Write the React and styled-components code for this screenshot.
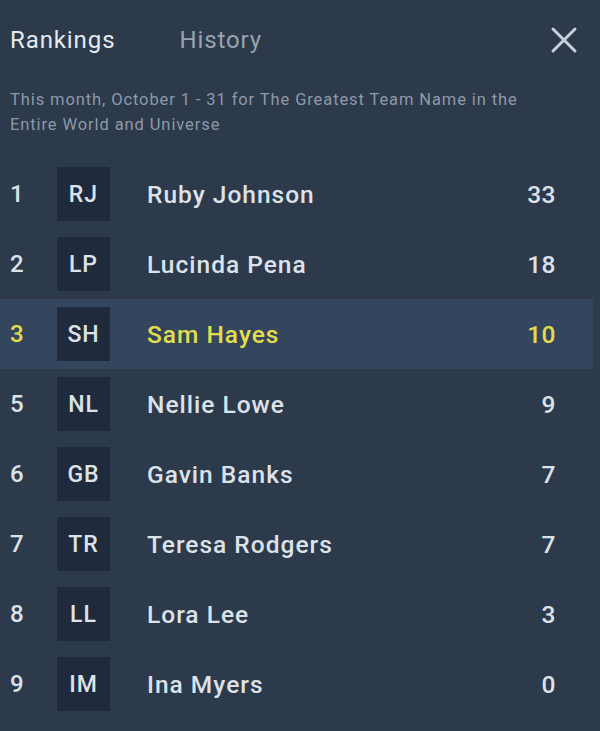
import React from 'react'
import styled, { createGlobalStyle } from 'styled-components'

const players = [
  { rank: 1, initials: 'RJ', name: 'Ruby Johnson', score: 33 },
  { rank: 2, initials: 'LP', name: 'Lucinda Pena', score: 18 },
  { rank: 3, initials: 'SH', name: 'Sam Hayes', score: 10, me: true },
  { rank: 5, initials: 'NL', name: 'Nellie Lowe', score: 9 },
  { rank: 6, initials: 'GB', name: 'Gavin Banks', score: 7 },
  { rank: 7, initials: 'TR', name: 'Teresa Rodgers', score: 7 },
  { rank: 8, initials: 'LL', name: 'Lora Lee', score: 3 },
  { rank: 9, initials: 'IM', name: 'Ina Myers', score: 0 },
]

function App() {
  return (
    <>
      <GlobalStyle />
      <Panel>
        <Header>
          <Tab active>Rankings</Tab>
          <Tab>History</Tab>
          <Close aria-label="close">
            <svg width="28" height="28" viewBox="0 0 28 28">
              <path d="M3 3 L25 25 M25 3 L3 25" stroke="#c9cfd7" strokeWidth="3" strokeLinecap="round" />
            </svg>
          </Close>
        </Header>
        <Subtitle>
          This month, October 1 - 31 for The Greatest Team Name in the Entire World and Universe
        </Subtitle>
        <List>
          {players.map((p) => (
            <Row key={p.rank} me={p.me}>
              <Rank me={p.me}>{p.rank}</Rank>
              <Avatar>{p.initials}</Avatar>
              <Name me={p.me}>{p.name}</Name>
              <Score me={p.me}>{p.score}</Score>
            </Row>
          ))}
        </List>
      </Panel>
    </>
  )
}

const GlobalStyle = createGlobalStyle`
  html, body {
    margin: 0;
    background: #2c3a4c;
  }
  body {
    font-family: Roboto, "Liberation Sans", sans-serif;
  }
`

const Panel = styled.div`
  width: 600px;
  min-height: 731px;
  background: #2c3a4c;
  overflow: hidden;
`

const Header = styled.div`
  display: flex;
  align-items: center;
  height: 80px;
  padding: 0 22px 0 10px;
`

const Tab = styled.div`
  font-size: 24px;
  letter-spacing: 0.9px;
  color: ${(p) => (p.active ? '#e6eaef' : '#98a3b1')};
  margin-right: 64px;
`

const Close = styled.div`
  margin-left: auto;
  display: flex;
`

const Subtitle = styled.p`
  margin: 7px 0 0;
  padding: 0 50px 0 10px;
  font-size: 16.5px;
  letter-spacing: 0.9px;
  line-height: 25px;
  color: #8e99a7;
`

const List = styled.div`
  margin-top: 22px;
`

const Row = styled.div`
  display: flex;
  align-items: center;
  height: 70px;
  width: 593px;
  background: ${(p) => (p.me ? '#33465e' : 'transparent')};
`

const Rank = styled.div`
  width: 57px;
  padding-left: 10px;
  box-sizing: border-box;
  font-size: 24px;
  font-weight: 500;
  color: ${(p) => (p.me ? '#e3dc4c' : '#dde2e8')};
`

const Avatar = styled.div`
  width: 53px;
  height: 54px;
  display: flex;
  align-items: center;
  justify-content: center;
  background: #1f2b3c;
  color: #dde2e8;
  font-size: 23px;
  letter-spacing: 1px;
  font-weight: 500;
`

const Name = styled.div`
  flex: 1;
  margin-left: 37px;
  font-size: 24.5px;
  letter-spacing: 1px;
  font-weight: 500;
  color: ${(p) => (p.me ? '#e3dc4c' : '#dde2e8')};
`

const Score = styled.div`
  padding-right: 37px;
  font-size: 24.5px;
  letter-spacing: 0.5px;
  font-weight: 500;
  color: ${(p) => (p.me ? '#e3dc4c' : '#dde2e8')};
`

export default App
